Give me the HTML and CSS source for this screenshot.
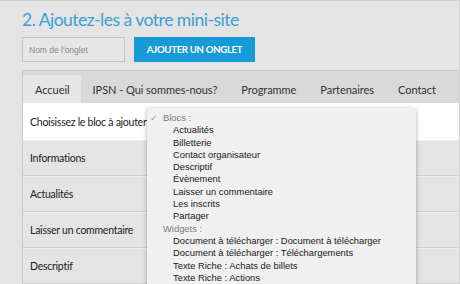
FILE: index.html
```html
<!DOCTYPE html>
<html lang="fr">
<head>
<meta charset="utf-8">
<link rel="stylesheet" href="styles.css">
</head>
<body>
<div class="page">
  <h2 class="title">2. Ajoutez-les à votre mini-site</h2>
  <div class="addbar">
    <div class="input">Nom de l'onglet</div>
    <div class="btn">AJOUTER UN ONGLET</div>
  </div>
  <div class="panel">
    <div class="tabs">
      <div class="tab active">Accueil</div>
      <div class="tab">IPSN - Qui sommes-nous?</div>
      <div class="tab">Programme</div>
      <div class="tab">Partenaires</div>
      <div class="tab">Contact</div>
    </div>
    <div class="chooser">Choisissez le bloc à ajouter :</div>
    <div class="row">Informations</div>
    <div class="row">Actualités</div>
    <div class="row">Laisser un commentaire</div>
    <div class="row">Descriptif</div>
    <div class="menu">
      <div class="group"><span class="check">✓</span>Blocs :</div>
      <div class="item">Actualités</div>
      <div class="item">Billetterie</div>
      <div class="item">Contact organisateur</div>
      <div class="item">Descriptif</div>
      <div class="item">Évènement</div>
      <div class="item">Laisser un commentaire</div>
      <div class="item">Les inscrits</div>
      <div class="item">Partager</div>
      <div class="group"><span class="check"></span>Widgets :</div>
      <div class="item">Document à télécharger : Document à télécharger</div>
      <div class="item">Document à télécharger : Téléchargements</div>
      <div class="item">Texte Riche : Achats de billets</div>
      <div class="item">Texte Riche : Actions</div>
    </div>
  </div>
</div>
</body>
</html>
```
FILE: styles.css
```css
* { box-sizing: border-box; }
html, body { margin: 0; padding: 0; }
body {
  width: 460px;
  height: 284px;
  overflow: hidden;
  background: #e4e4e4;
  font-family: "Lato", "Open Sans", sans-serif;
}
.page {
  height: 284px;
  border-top: 1px solid #cfcfcf;
  border-right: 1px solid #d2d2d2;
  padding: 8px 0 0 22px;
}
.title {
  margin: 0;
  font-family: "Lato", sans-serif;
  font-weight: 400;
  font-size: 17.5px;
  line-height: 22px;
  color: #3a9fd8;
  letter-spacing: -0.5px;
  white-space: nowrap;
}
.addbar {
  display: flex;
  gap: 9px;
  margin-top: 6px;
  height: 25px;
}
.input {
  width: 103px;
  border: 1px solid #c6c6c6;
  background: #e6e6e6;
  font-family: "Liberation Sans", sans-serif;
  font-size: 8.5px;
  color: #8a8a8a;
  padding: 0 6px;
  display: flex;
  align-items: center;
}
.btn {
  width: 121px;
  background: #179ad8;
  color: #fff;
  font-family: "Lato", sans-serif;
  font-weight: 700;
  font-size: 9.6px;
  display: flex;
  align-items: center;
  justify-content: center;
  letter-spacing: -0.3px;
}
.panel {
  position: relative;
  margin-top: 8px;
  border-top: 1px solid #cacaca;
  border-left: 1px solid #cacaca;
}
.tabs {
  display: flex;
  background: #d9d9d9;
  height: 32px;
  padding-top: 4px;
  font-size: 11px;
  letter-spacing: -0.05px;
  color: #333;
  white-space: nowrap;
}
.tab {
  display: flex;
  align-items: center;
  padding: 0 12px;
}
.tab.active { background: #e6e6e6; padding: 0 11px 0 12px; }
.chooser {
  background: #fff;
  height: 37px;
  display: flex;
  align-items: center;
  padding-left: 7px;
  font-size: 10.6px;
  letter-spacing: -0.3px;
  color: #222;
  white-space: nowrap;
}
.row {
  height: 36px;
  display: flex;
  align-items: center;
  padding-left: 7px;
  font-size: 10.5px;
  letter-spacing: -0.25px;
  color: #222;
  background: #e4e4e4;
  border-bottom: 1px solid #cfcfcf;
  border-top: 1px solid #efefef;
}
.menu {
  position: absolute;
  left: 124px;
  top: 37px;
  width: 269px;
  height: 190px;
  background: #f0f0f0;
  border-radius: 4px;
  box-shadow: 0 1px 4px rgba(0,0,0,0.35);
  padding: 4px 0 0 3px;
  font-family: "Liberation Sans", "Helvetica", sans-serif;
  font-size: 9.4px;
  line-height: 12.3px;
  color: #1a1a1a;
}
.group { color: #7a7a7a; display: flex; }
.check { display: inline-block; width: 13px; color: #9a9a9a; }
.item { padding-left: 23px; }
```
